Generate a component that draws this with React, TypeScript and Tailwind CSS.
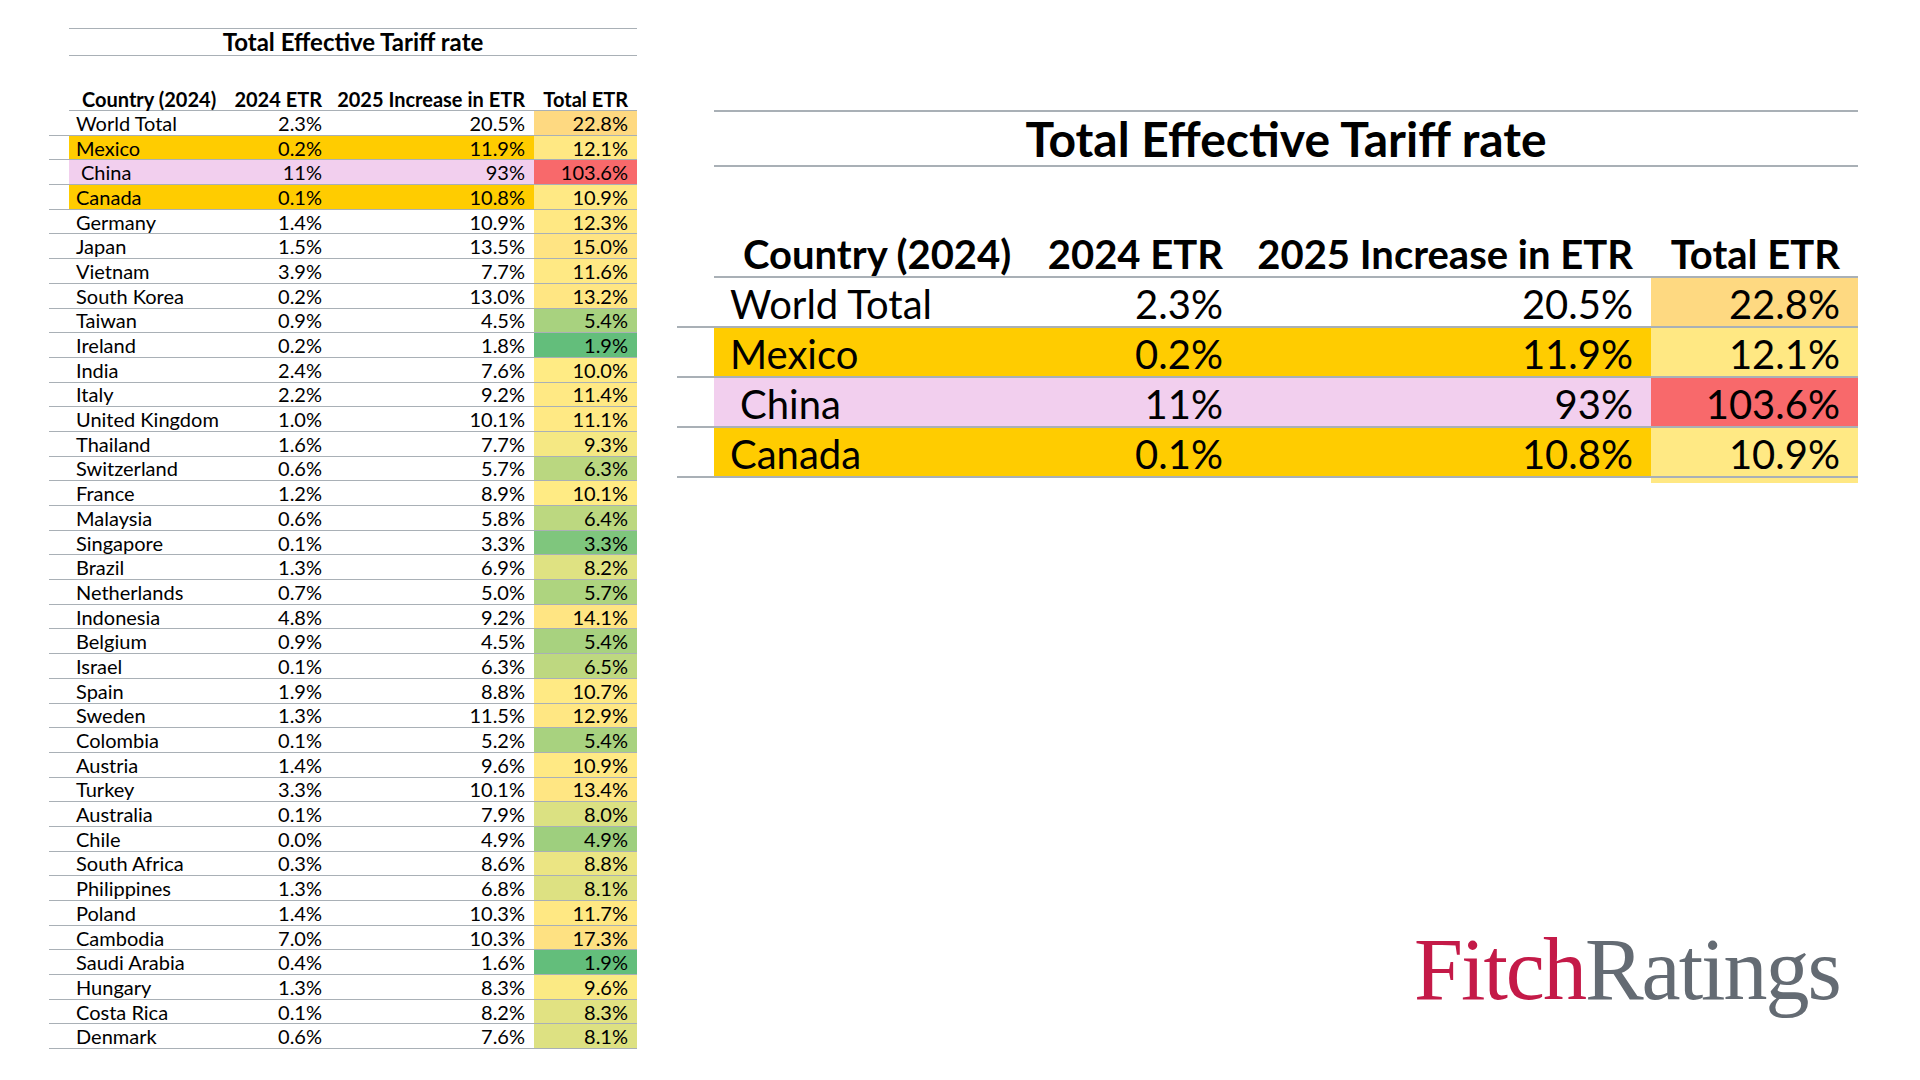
type Row = [string, string, string, number];

const rows: Row[] = [
  ["World Total", "2.3%", "20.5%", 22.8],
  ["Mexico", "0.2%", "11.9%", 12.1],
  ["China", "11%", "93%", 103.6],
  ["Canada", "0.1%", "10.8%", 10.9],
  ["Germany", "1.4%", "10.9%", 12.3],
  ["Japan", "1.5%", "13.5%", 15.0],
  ["Vietnam", "3.9%", "7.7%", 11.6],
  ["South Korea", "0.2%", "13.0%", 13.2],
  ["Taiwan", "0.9%", "4.5%", 5.4],
  ["Ireland", "0.2%", "1.8%", 1.9],
  ["India", "2.4%", "7.6%", 10.0],
  ["Italy", "2.2%", "9.2%", 11.4],
  ["United Kingdom", "1.0%", "10.1%", 11.1],
  ["Thailand", "1.6%", "7.7%", 9.3],
  ["Switzerland", "0.6%", "5.7%", 6.3],
  ["France", "1.2%", "8.9%", 10.1],
  ["Malaysia", "0.6%", "5.8%", 6.4],
  ["Singapore", "0.1%", "3.3%", 3.3],
  ["Brazil", "1.3%", "6.9%", 8.2],
  ["Netherlands", "0.7%", "5.0%", 5.7],
  ["Indonesia", "4.8%", "9.2%", 14.1],
  ["Belgium", "0.9%", "4.5%", 5.4],
  ["Israel", "0.1%", "6.3%", 6.5],
  ["Spain", "1.9%", "8.8%", 10.7],
  ["Sweden", "1.3%", "11.5%", 12.9],
  ["Colombia", "0.1%", "5.2%", 5.4],
  ["Austria", "1.4%", "9.6%", 10.9],
  ["Turkey", "3.3%", "10.1%", 13.4],
  ["Australia", "0.1%", "7.9%", 8.0],
  ["Chile", "0.0%", "4.9%", 4.9],
  ["South Africa", "0.3%", "8.6%", 8.8],
  ["Philippines", "1.3%", "6.8%", 8.1],
  ["Poland", "1.4%", "10.3%", 11.7],
  ["Cambodia", "7.0%", "10.3%", 17.3],
  ["Saudi Arabia", "0.4%", "1.6%", 1.9],
  ["Hungary", "1.3%", "8.3%", 9.6],
  ["Costa Rica", "0.1%", "8.2%", 8.3],
  ["Denmark", "0.6%", "7.6%", 8.1],
];

// excel-style green / yellow / red colour scale
function scaleColor(v: number) {
  const min = 1.9;
  const mid = 9.8;
  const max = 103.6;
  const green = [99, 190, 123];
  const yellow = [255, 235, 132];
  const red = [248, 105, 107];
  let from = green;
  let to = yellow;
  let t = 0;
  if (v <= mid) {
    t = (v - min) / (mid - min);
  } else {
    from = yellow;
    to = red;
    t = (v - mid) / (max - mid);
  }
  t = Math.max(0, Math.min(1, t));
  const c = from.map((x, i) => Math.round(x + (to[i] - x) * t));
  return `rgb(${c[0]}, ${c[1]}, ${c[2]})`;
}

const small = {
  wrap: "w-[588px] text-[20px]",
  spacer: "w-[20px] shrink-0",
  title: "ml-[20px] h-[28px] border-y text-[24px] leading-[28px]",
  header: "ml-[20px] h-[55px] border-b leading-[22px]",
  a: "w-[161px]",
  b: "w-[97px] pr-[5px]",
  c: "w-[207px] pr-[9px]",
  d: "w-[103px] pr-[9px]",
  headA: "pl-[13px]",
  rowA: "pl-[7px]",
  chinaA: "pl-[12px]",
  row: "h-[24.7px] border-b",
  cell: "",
};

const big = {
  wrap: "w-[1181px] text-[40px]",
  spacer: "w-[37px] shrink-0",
  title: "ml-[37px] h-[57px] border-y-2 text-[48px] leading-[56px]",
  header: "ml-[37px] h-[111px] border-b-2 leading-[44px]",
  a: "w-[324px]",
  b: "w-[194px] pr-[9px]",
  c: "w-[419px] pr-[18px]",
  d: "w-[207px] pr-[18px]",
  headA: "pl-[29px]",
  rowA: "pl-[16px]",
  chinaA: "pl-[26px]",
  row: "h-[50px] border-b-2",
  cell: "pt-[3px]",
};

function TariffTable({ s, data }: { s: typeof small; data: Row[] }) {
  return (
    <div className={`${s.wrap} text-black [font-family:Lato,sans-serif]`}>
      <div className={`${s.title} border-[#a9b0b6] flex items-center justify-center font-bold whitespace-nowrap`}>
        Total Effective Tariff rate
      </div>
      <div className={`${s.header} border-[#a9b0b6] flex items-end font-bold`}>
        <div className={`${s.a} ${s.headA} shrink-0 whitespace-nowrap`}>Country (2024)</div>
        <div className={`${s.b} shrink-0 text-right whitespace-nowrap`}>2024 ETR</div>
        <div className={`${s.c} shrink-0 text-right whitespace-nowrap`}>2025 Increase in ETR</div>
        <div className={`${s.d} shrink-0 text-right whitespace-nowrap`}>Total ETR</div>
      </div>
      {data.map(([name, etr, inc, total]) => {
        const fill =
          name === "Mexico" || name === "Canada"
            ? "bg-[#ffcc00]"
            : name === "China"
              ? "bg-[#f2cfee]"
              : "";
        return (
          <div key={name} className={`${s.row} border-[#a9b0b6] flex`}>
            <div className={s.spacer} />
            <div
              className={`${s.a} ${s.cell} ${name === "China" ? s.chinaA : s.rowA} ${fill} shrink-0 flex items-center whitespace-nowrap`}
            >
              {name}
            </div>
            <div className={`${s.b} ${s.cell} ${fill} shrink-0 flex items-center justify-end`}>{etr}</div>
            <div className={`${s.c} ${s.cell} ${fill} shrink-0 flex items-center justify-end`}>{inc}</div>
            <div
              className={`${s.d} ${s.cell} shrink-0 flex items-center justify-end`}
              style={{ backgroundColor: scaleColor(total) }}
            >
              {total.toFixed(1)}%
            </div>
          </div>
        );
      })}
    </div>
  );
}

export default function App() {
  return (
    <div className="w-[1920px] h-[1080px] bg-white flex overflow-hidden">
      <div className="pl-[49px] pt-[28px] shrink-0">
        <TariffTable s={small} data={rows} />
      </div>

      <div className="ml-[40px] pt-[110px] flex flex-col h-full">
        <TariffTable s={big} data={rows.slice(0, 4)} />
        {/* peek of the next row's total cell */}
        <div className="flex h-[5px]">
          <div className="w-[974px]" />
          <div className="w-[207px]" style={{ backgroundColor: scaleColor(12.3) }} />
        </div>

        <div className="mt-auto mb-[66px] ml-[737px] [font-family:Liberation_Serif,serif] text-[88px] leading-none tracking-[-2px] whitespace-nowrap">
          <span className="text-[#c41a48]">Fitch</span>
          <span className="text-[#646b73]">Ratings</span>
        </div>
      </div>
    </div>
  );
}
